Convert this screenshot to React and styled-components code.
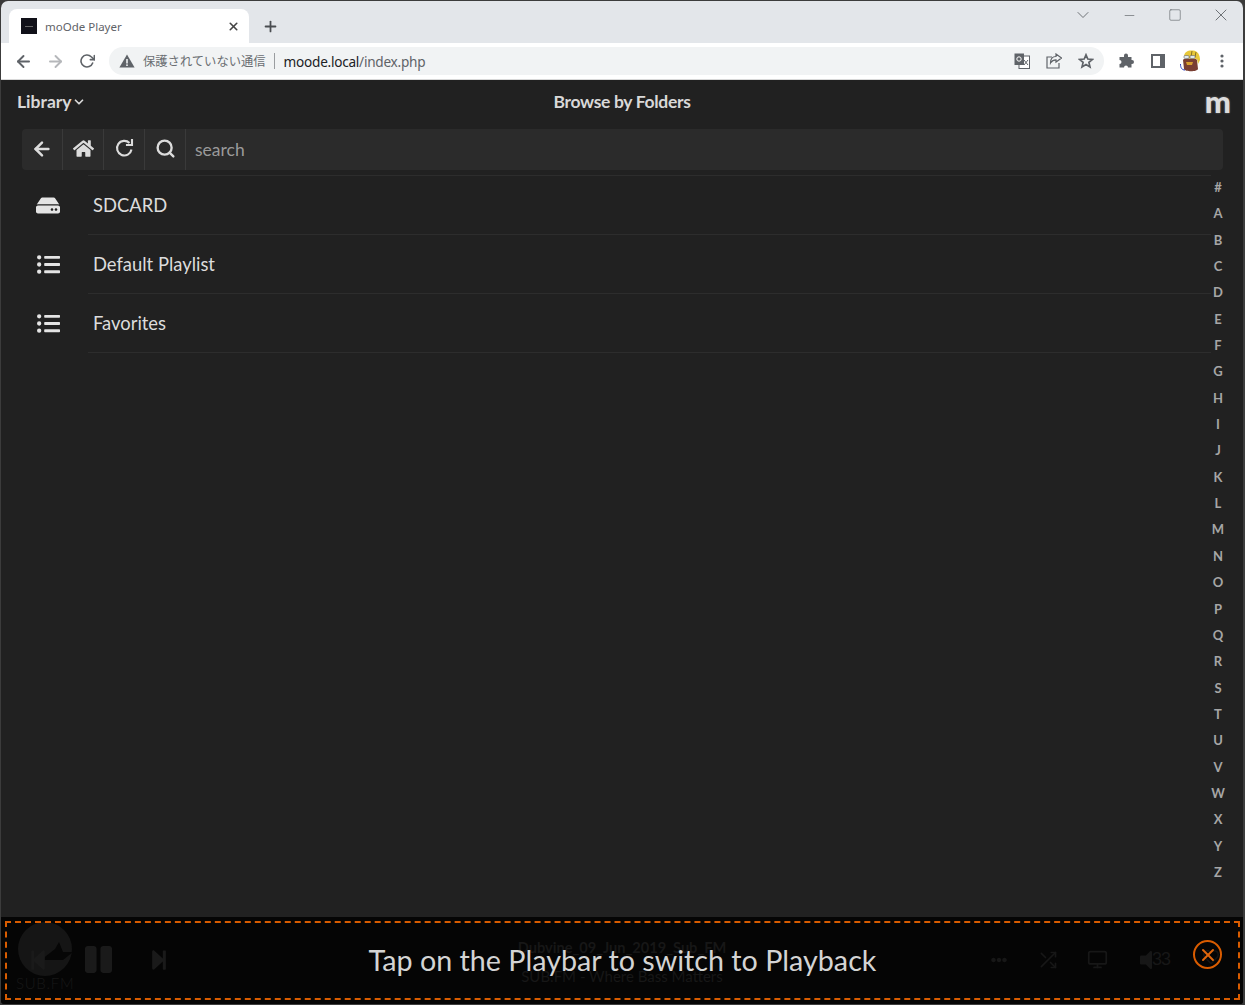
import React from 'react';
import styled, { createGlobalStyle } from 'styled-components';
import { FaHome, FaHdd, FaListUl, FaPause, FaStepForward, FaStepBackward, FaEllipsisH, FaVolumeOff, FaRegHeart } from 'react-icons/fa';
import { FiX, FiArrowLeft, FiArrowRight, FiRotateCw, FiPlus, FiChevronDown, FiMinus, FiSquare, FiSearch, FiShuffle, FiMonitor } from 'react-icons/fi';

const GlobalStyle = createGlobalStyle`
  html, body { margin: 0; padding: 0; background: #3a3a3a; }
  * { box-sizing: border-box; }
`;

const Window = styled.div`
  width: 1245px;
  height: 1005px;
  display: flex;
  flex-direction: column;
  overflow: hidden;
  border: 1px solid #3c3c3c;
  border-right-width: 2px;
  border-radius: 8px 8px 4px 4px;
  background: #212121;
  font-family: Lato, sans-serif;
`;

const TabStrip = styled.div`
  height: 42px;
  flex: none;
  display: flex;
  background: #e3e6ea;
  padding: 8px 0 0 8px;
`;

const Tab = styled.div`
  width: 240px;
  height: 34px;
  display: flex;
  align-items: center;
  padding: 0 9px 0 12px;
  background: #fff;
  border-radius: 8px 8px 0 0;
  font: 11.5px 'Noto Sans', sans-serif;
  color: #5f6368;
`;

const Favicon = styled.div`
  width: 16px;
  height: 16px;
  margin-right: 8px;
  background: #101018;
  display: flex;
  align-items: center;
  justify-content: center;
  &::after { content: ''; width: 8px; height: 1px; background: #666; }
`;

const TabTitle = styled.span`
  flex: 1;
`;

const TabClose = styled(FiX)`
  font-size: 13px;
  color: #444;
  stroke-width: 3;
`;

const NewTab = styled(FiPlus)`
  font-size: 17px;
  color: #4a4d51;
  margin: 9px 0 0 13px;
  stroke-width: 2.5;
`;

const WindowButtons = styled.div`
  margin: -1px -1px 0 auto;
  display: flex;
  align-items: center;
  height: 14px;
  color: #63676b;
  svg { stroke-width: 1.1; }
`;

const WindowSlot = styled.span`
  width: 46px;
  display: flex;
  justify-content: center;
`;

const Toolbar = styled.div`
  height: 37px;
  flex: none;
  display: flex;
  align-items: center;
  background: #fff;
  padding-left: 6px;
  color: #5f6368;
  border-bottom: 1px solid #d8d8d8;
`;

const NavIcon = styled.span`
  width: 32px;
  display: flex;
  justify-content: center;
  font-size: 19px;
  color: ${p => (p.$off ? '#b5b7ba' : '#5f6368')};
  svg { stroke-width: 2.4; }
`;

const Omnibox = styled.div`
  width: 995px;
  height: 28px;
  margin-left: 6px;
  flex: none;
  display: flex;
  align-items: center;
  padding-left: 10px;
  background: #f1f3f4;
  border-radius: 14px;
`;

const SecurityLabel = styled.span`
  margin-left: 8px;
  font: 12.3px 'Noto Sans CJK JP', sans-serif;
  color: #6a6e72;
`;

const Divider = styled.span`
  width: 1px;
  height: 16px;
  margin: 0 9px 0 8px;
  background: #9a9da0;
`;

const Host = styled.span`
  font: 13.6px 'Noto Sans', sans-serif;
  letter-spacing: -0.25px;
  color: #202124;
`;

const UrlPath = styled.span`
  color: #5f6368;
`;

const OmniIcons = styled.div`
  margin-left: auto;
  display: flex;
  align-items: center;
  gap: 16px;
  padding-right: 10px;
`;

const ToolIcons = styled.div`
  display: flex;
  align-items: center;
  margin-left: 6px;
`;

const ToolSlot = styled.span`
  width: 32px;
  display: flex;
  justify-content: center;
`;

const Page = styled.div`
  flex: 1;
  display: flex;
  flex-direction: column;
  min-height: 0;
`;

const Header = styled.div`
  height: 49px;
  flex: none;
  display: grid;
  grid-template-columns: 1fr auto 1fr;
  align-items: center;
  padding: 0 16px 7px 16px;
  color: #d8d8d8;
  font-weight: 700;
  font-size: 17.5px;
  letter-spacing: -0.32px;
`;

const LibraryMenu = styled.div`
  display: flex;
  align-items: center;
  letter-spacing: 0;
  svg { font-size: 14px; stroke-width: 3; margin-top: 2px; }
`;

const Logo = styled.div`
  justify-self: end;
  margin-right: -4px;
  font-size: 31px;
  font-weight: 900;
  line-height: 1;
  color: #dcdcdc;
  letter-spacing: 0;
  text-shadow: 0 0 2px rgba(220, 220, 220, 0.5);
`;

const SearchBar = styled.div`
  height: 41px;
  flex: none;
  margin: 0 20px 0 21px;
  display: flex;
  background: #2b2b2b;
  border-radius: 4px;
`;

const SearchButton = styled.div`
  width: 41px;
  flex: none;
  display: flex;
  align-items: center;
  justify-content: center;
  border-right: 1px solid #3a3a3a;
  color: #dcdcdc;
  padding-bottom: 2px;
  svg.thick { stroke-width: 2.7; }
`;

const SearchText = styled.div`
  padding: 0 10px 1px 9px;
  display: flex;
  align-items: center;
  font-size: 17.5px;
  color: #9a9a9a;
`;

const Browser = styled.div`
  flex: 1;
  display: flex;
  min-height: 0;
  padding-top: 5px;
`;

const Rows = styled.div`
  flex: 1;
  padding-left: 87px;
`;

const Row = styled.div`
  height: 59px;
  position: relative;
  display: flex;
  align-items: center;
  padding-left: 5px;
  border-top: 1px solid #2d2d2d;
  font-size: 18.4px;
  color: #dcdcdc;
  &:last-child { height: 60px; border-bottom: 1px solid #2d2d2d; }
`;

const RowIcon = styled.span`
  position: absolute;
  left: -52px;
  width: 24px;
  display: flex;
  justify-content: center;
  font-size: ${p => p.$size}px;
  color: #e4e4e4;
`;

const AlphaIndex = styled.div`
  width: 32px;
  flex: none;
  padding: 4px 18px 0 0;
  height: 706px;
  display: flex;
  flex-direction: column;
  justify-content: space-between;
  align-items: center;
  font-size: 13px;
  line-height: 17px;
  font-weight: 700;
  color: #a6a6a6;
`;

const PlayBar = styled.div`
  height: 87px;
  flex: none;
  position: relative;
  display: grid;
  grid-template-columns: 1fr auto 1fr;
  align-items: center;
  background: #050505;
  padding: 0 26px;
  color: #1a1a1a;
`;

const CoverArt = styled.div`
  position: absolute;
  left: 15px;
  top: 5px;
  display: flex;
  flex-direction: column;
  align-items: center;
  font: 300 15px/13px Lato, sans-serif;
  letter-spacing: 0.7px;
  color: #181818;
`;

const Transport = styled.div`
  position: relative;
  display: flex;
  align-items: center;
  gap: 34px;
  margin-top: -2px;
`;

const SongInfo = styled.div`
  text-align: center;
  font-size: 15px;
  line-height: 28px;
  color: #171717;
  margin-top: 2px;
`;

const SongTitle = styled.div`
  font-weight: 700;
  font-size: 14.6px;
`;

const BarTools = styled.div`
  justify-self: end;
  display: flex;
  align-items: center;
  gap: 31px;
  margin: -2px 47px 0 0;
  color: #171717;
`;

const Monitor = styled(FiMonitor)`
  margin-left: -2px;
`;

const Volume = styled.span`
  display: flex;
  align-items: center;
  margin-left: 1px;
  font: 18px 'Liberation Sans', sans-serif;
  letter-spacing: -1px;
  svg { margin: 0 -6px; }
`;

const Hint = styled.div`
  position: absolute;
  left: 4px;
  right: 3px;
  top: 4px;
  bottom: 4px;
  display: flex;
  align-items: center;
  justify-content: center;
  border: 2px dashed #d95c00;
  font-size: 28.7px;
  color: #d4d4d4;
  padding-bottom: 1px;
`;

const HintClose = styled.div`
  position: absolute;
  right: 16px;
  top: 17px;
  width: 29px;
  height: 29px;
  border: 2px solid #d95c00;
  border-radius: 50%;
  display: flex;
  align-items: center;
  justify-content: center;
`;

const HintCross = styled(FiX)`
  position: relative;
  font-size: 20px;
  color: #e0660c;
  stroke-width: 2.4;
`;

const HeartGhost = styled(FaRegHeart)`
  position: absolute;
  right: 1px;
  top: 7px;
  font-size: 16px;
  color: #141414;
`;

const folders = [
  { name: 'SDCARD', icon: <FaHdd />, size: 25 },
  { name: 'Default Playlist', icon: <FaListUl />, size: 23 },
  { name: 'Favorites', icon: <FaListUl />, size: 23 },
];

const letters = '#ABCDEFGHIJKLMNOPQRSTUVWXYZ'.split('');

const WarnIcon = () => (
  <svg width="16" height="14" viewBox="0 0 16 14">
    <path d="M8 0.5 L15.6 13.5 H0.4 Z" fill="#5f6368" />
    <rect x="7.2" y="5" width="1.6" height="4.5" fill="#f1f3f4" />
    <rect x="7.2" y="10.4" width="1.6" height="1.6" fill="#f1f3f4" />
  </svg>
);

const TranslateIcon = () => (
  <svg width="16" height="16" viewBox="0 0 16 16">
    <rect x="5" y="3" width="10.5" height="12.5" fill="#fff" stroke="#5f6368" />
    <rect x="0.5" y="0.5" width="9.5" height="11.5" fill="#5f6368" />
    <circle cx="5" cy="6" r="2.2" fill="none" stroke="#fff" />
    <path d="M10 7 L14 12 M14 7 L10 12" stroke="#5f6368" />
  </svg>
);

const ShareIcon = () => (
  <svg width="16" height="16" viewBox="0 0 16 16" fill="none" stroke="#5f6368" strokeWidth="1.2">
    <path d="M6 4 H1 V15 H13 V10" />
    <path d="M15.5 5 L10 1 V3.5 C6 3.5 4.5 6.5 4.5 10 C6 7.5 8 6.8 10 6.8 V9 Z" fill="#f1f3f4" />
  </svg>
);

const StarIcon = () => (
  <svg width="16" height="16" viewBox="0 0 16 16" fill="none" stroke="#5f6368" strokeWidth="1.7">
    <path d="M8 1.8 L9.8 6 L14.4 6.4 L10.9 9.4 L12 13.9 L8 11.5 L4 13.9 L5.1 9.4 L1.6 6.4 L6.2 6 Z" />
  </svg>
);

const PuzzleIcon = () => (
  <svg width="16" height="16" viewBox="0 0 16 16">
    <path d="M6 2.5 A2 2 0 0 1 10 2.5 V4 H13.5 V7 H14 A2 2 0 0 1 14 11 H13.5 V14.5 H10 A2 2 0 0 0 6 14.5 H1.5 V11 A2 2 0 0 0 1.5 7 V4 H6 Z" fill="#5f6368" />
  </svg>
);

const SidePanelIcon = () => (
  <svg width="14" height="14" viewBox="0 0 14 14">
    <path d="M0 0 H14 V14 H0 Z M2 2 V12 H9 V2 Z" fill="#5f6368" fillRule="evenodd" />
  </svg>
);

const Avatar = () => (
  <svg width="21" height="23" viewBox="0 0 21 23">
    <path d="M3 10 C3 8 17 8 17 10 L18 19 C17 22 5 22 4 19 Z" fill="#7a3f33" />
    <path d="M4 7 C4 1 9 0 13 0.5 C18 1 20 5 20 10 L18 14 L17 9 L5 8 Z" fill="#e8c83a" />
    <path d="M12 1 L11 7 M16 2 L15 7" stroke="#5a4a20" strokeWidth="0.7" />
    <rect x="4" y="5.5" width="5" height="3" rx="1" fill="#dfe8ee" stroke="#555" strokeWidth="0.5" />
    <rect x="10" y="5.5" width="5" height="3" rx="1" fill="#dfe8ee" stroke="#555" strokeWidth="0.5" />
    <path d="M6 12 H13 L12 15 H7 Z" fill="#d8a030" />
    <path d="M0.5 14 C0.5 18 2 20 5 20" stroke="#2a3fc0" strokeWidth="1" fill="none" />
  </svg>
);

const DotsIcon = () => (
  <svg width="4" height="14" viewBox="0 0 4 14" fill="#5f6368">
    <circle cx="2" cy="2" r="1.6" />
    <circle cx="2" cy="7" r="1.6" />
    <circle cx="2" cy="12" r="1.6" />
  </svg>
);

const RedoIcon = () => (
  <svg width="19" height="19" viewBox="0 0 19 19" fill="none" stroke="currentColor" strokeWidth="2.1">
    <path d="M16.5 10.5 A7.3 7.3 0 1 1 14.5 4" />
    <path d="M17 1 V6 H12" strokeLinecap="square" />
  </svg>
);

const SubFmDisc = () => (
  <svg width="56" height="55" viewBox="0 0 56 55">
    <circle cx="28" cy="27" r="27" fill="#151515" />
    <path d="M24 38 L38 27 L42 20 L46 30 L56 30 L46 38 Z" fill="#060606" />
  </svg>
);

const App = () => (
  <Window>
    <GlobalStyle />
    <TabStrip>
      <Tab>
        <Favicon />
        <TabTitle>moOde Player</TabTitle>
        <TabClose />
      </Tab>
      <NewTab />
      <WindowButtons>
        <WindowSlot><FiChevronDown size={20} /></WindowSlot>
        <WindowSlot><FiMinus size={15} /></WindowSlot>
        <WindowSlot><FiSquare size={14} /></WindowSlot>
        <WindowSlot><FiX size={20} /></WindowSlot>
      </WindowButtons>
    </TabStrip>
    <Toolbar>
      <NavIcon><FiArrowLeft /></NavIcon>
      <NavIcon $off><FiArrowRight /></NavIcon>
      <NavIcon><FiRotateCw size={16} /></NavIcon>
      <Omnibox>
        <WarnIcon />
        <SecurityLabel>保護されていない通信</SecurityLabel>
        <Divider />
        <Host>moode.local<UrlPath>/index.php</UrlPath></Host>
        <OmniIcons>
          <TranslateIcon />
          <ShareIcon />
          <StarIcon />
        </OmniIcons>
      </Omnibox>
      <ToolIcons>
        <ToolSlot><PuzzleIcon /></ToolSlot>
        <ToolSlot><SidePanelIcon /></ToolSlot>
        <ToolSlot><Avatar /></ToolSlot>
        <ToolSlot><DotsIcon /></ToolSlot>
      </ToolIcons>
    </Toolbar>
    <Page>
      <Header>
        <LibraryMenu>Library<FiChevronDown /></LibraryMenu>
        <span>Browse by Folders</span>
        <Logo>m</Logo>
      </Header>
      <SearchBar>
        <SearchButton><FiArrowLeft className="thick" size={22} /></SearchButton>
        <SearchButton><FaHome size={21} /></SearchButton>
        <SearchButton><RedoIcon /></SearchButton>
        <SearchButton><FiSearch className="thick" size={21} /></SearchButton>
        <SearchText>search</SearchText>
      </SearchBar>
      <Browser>
        <Rows>
          {folders.map(f => (
            <Row key={f.name}>
              <RowIcon $size={f.size}>{f.icon}</RowIcon>
              {f.name}
            </Row>
          ))}
        </Rows>
        <AlphaIndex>
          {letters.map(l => <span key={l}>{l}</span>)}
        </AlphaIndex>
      </Browser>
      <PlayBar>
        <CoverArt>
          <SubFmDisc />
          SUB.FM
        </CoverArt>
        <Transport>
          <FaStepBackward size={22} />
          <FaPause size={31} />
          <FaStepForward size={22} />
        </Transport>
        <SongInfo>
          <SongTitle>Dubvine_09_Jun_2019_Sub_FM</SongTitle>
          SUB.FM - Where Bass Matters
        </SongInfo>
        <BarTools>
          <FaEllipsisH size={16} />
          <FiShuffle size={20} />
          <Monitor size={21} />
          <Volume><FaVolumeOff size={24} />33</Volume>
        </BarTools>
        <Hint>
          Tap on the Playbar to switch to Playback
          <HintClose>
            <HeartGhost />
            <HintCross />
          </HintClose>
        </Hint>
      </PlayBar>
    </Page>
  </Window>
);

export default App;
